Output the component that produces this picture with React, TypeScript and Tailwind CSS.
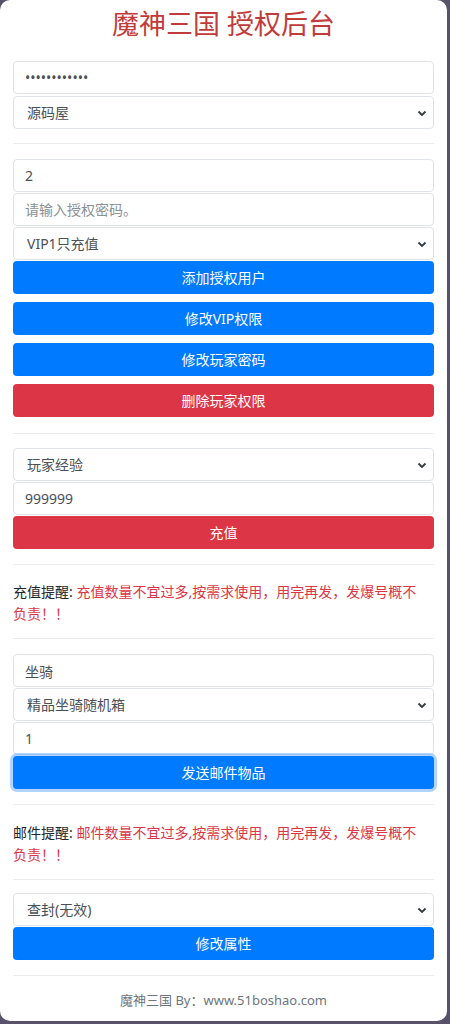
import React from 'react'

const FONT = '"Noto Sans", "Noto Sans CJK SC", sans-serif'

function Field({ value, placeholder, type = 'text' }: { value?: string; placeholder?: string; type?: string }) {
  return (
    <input
      type={type}
      defaultValue={value}
      placeholder={placeholder}
      className="block h-[33px] w-full rounded-[4px] border border-[#dfe2e6] bg-white px-[11px] text-[14px] text-[#495057] placeholder:text-[#8a9096] outline-none"
    />
  )
}

function Select({ label }: { label: string }) {
  return (
    <div className="relative">
      <select
        defaultValue={label}
        className="block h-[33px] w-full appearance-none rounded-[4px] border border-[#dfe2e6] bg-white pl-[13px] pr-8 text-[14px] text-[#495057] outline-none"
      >
        <option>{label}</option>
      </select>
      <svg
        className="pointer-events-none absolute right-[7px] top-1/2 -translate-y-1/2"
        width="10"
        height="8"
        viewBox="0 0 10 8"
      >
        <path d="M1.5 2.5 L5 6 L8.5 2.5" fill="none" stroke="#343a40" strokeWidth="1.8" />
      </svg>
    </div>
  )
}

function Btn({ children, color = 'blue', focus = false }: { children: React.ReactNode; color?: 'blue' | 'red'; focus?: boolean }) {
  const bg = color === 'blue' ? 'bg-[#007bff]' : 'bg-[#dc3545]'
  return (
    <button
      className={`${bg} block h-[33px] w-full rounded-[4px] text-[14px] text-white ${focus ? 'shadow-[0_0_0_3px_rgba(80,160,255,0.45)]' : ''}`}
    >
      {children}
    </button>
  )
}

function Rule() {
  return <div className="h-px w-full bg-[#ececec]" />
}

// 提醒文字
function Notice({ label, text }: { label: string; text: string }) {
  return (
    <p className="pr-[8px] text-[14px] leading-[22px] text-[#212529]">
      <span>{label}: </span>
      <span className="text-[#dc3545]">{text}</span>
    </p>
  )
}

export default function App() {
  return (
    <div className="h-[1024px] w-[450px] bg-[#57516a]" style={{ fontFamily: FONT }}>
      <div className="flex h-[1021px] w-[447px] flex-col rounded-[10px] bg-white px-[13px]">
        <h1 className="mt-[6px] text-center text-[27px] leading-[36px] text-[#c23b3b]">魔神三国 授权后台</h1>

        <div className="mt-[19px] flex flex-col gap-[2px]">
          <Field type="password" value="123456789012" />
          <Select label="源码屋" />
        </div>

        <div className="mt-[14px] mb-[15px]"><Rule /></div>

        <div className="flex flex-col gap-[1px]">
          <Field value="2" />
          <Field placeholder="请输入授权密码。" />
          <Select label="VIP1只充值" />
        </div>
        <div className="mt-[1px] flex flex-col gap-[8px]">
          <Btn>添加授权用户</Btn>
          <Btn>修改VIP权限</Btn>
          <Btn>修改玩家密码</Btn>
          <Btn color="red">删除玩家权限</Btn>
        </div>

        <div className="mt-[16px] mb-[14px]"><Rule /></div>

        <div className="flex flex-col gap-[1px]">
          <Select label="玩家经验" />
          <Field value="999999" />
        </div>
        <div className="mt-[1px]">
          <Btn color="red">充值</Btn>
        </div>

        <div className="mt-[15px] mb-[16px]"><Rule /></div>
        <Notice label="充值提醒" text="充值数量不宜过多,按需求使用，用完再发，发爆号概不负责！！" />
        <div className="mt-[13px] mb-[15px]"><Rule /></div>

        <div className="flex flex-col gap-[1px]">
          <Field value="坐骑" />
          <Select label="精品坐骑随机箱" />
          <Field value="1" />
        </div>
        <div className="mt-[1px]">
          <Btn focus>发送邮件物品</Btn>
        </div>

        <div className="mt-[15px] mb-[17px]"><Rule /></div>
        <Notice label="邮件提醒" text="邮件数量不宜过多,按需求使用，用完再发，发爆号概不负责！！" />
        <div className="mt-[13px] mb-[13px]"><Rule /></div>

        <Select label="查封(无效)" />
        <div className="mt-[1px]">
          <Btn>修改属性</Btn>
        </div>

        <div className="mt-[15px]"><Rule /></div>
        <p className="mt-[14px] text-center text-[13px] leading-[20px] text-[#6c757d]">魔神三国 By：www.51boshao.com</p>
      </div>
    </div>
  )
}
